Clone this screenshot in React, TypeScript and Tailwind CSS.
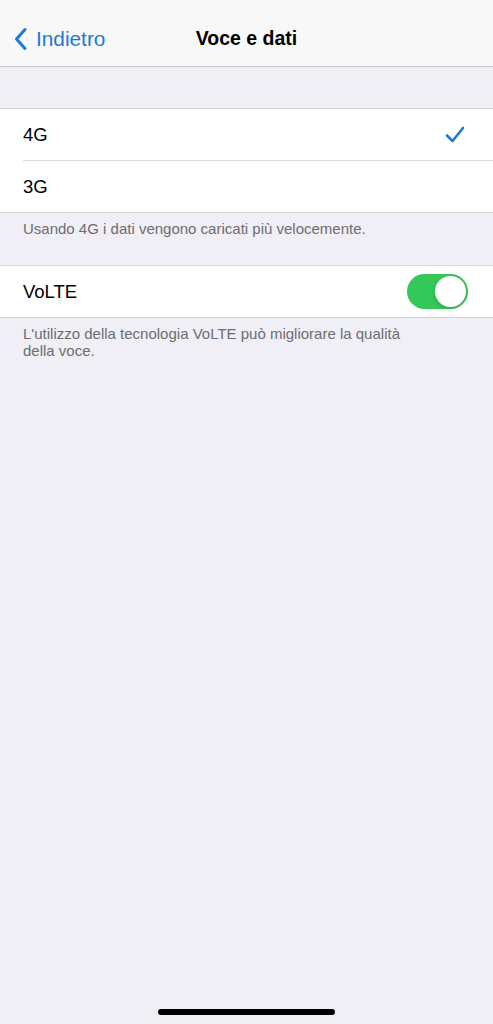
import React from "react";

const font = { fontFamily: '"Liberation Sans", Arial, sans-serif' };

function Toggle() {
  return (
    <div className="relative w-[61px] h-[35px] rounded-full bg-[#34c759]">
      <div className="absolute right-[2px] top-[2px] w-[31px] h-[31px] rounded-full bg-white shadow-[0_2px_4px_rgba(0,0,0,0.15)]" />
    </div>
  );
}

export default function App() {
  return (
    <div
      className="w-[493px] h-[1024px] bg-[#f0eff5] flex flex-col overflow-hidden"
      style={font}
    >
      {/* Nav bar */}
      <div className="h-[67px] bg-[#f8f8f8] border-b border-[#c9c8cd] flex items-center relative shrink-0">
        <div className="flex items-center pl-[13px] text-[#1f78d6] text-[20.8px] leading-none pt-[12px]">
          <svg width="16" height="24" viewBox="0 0 16 24" className="mr-[7px]">
            <path
              d="M12 2.5 L3.5 12 L12 21.5"
              fill="none"
              stroke="#1f78d6"
              strokeWidth="3"
              strokeLinecap="round"
              strokeLinejoin="round"
            />
          </svg>
          <span>Indietro</span>
        </div>
        <div className="absolute left-0 right-0 top-0 bottom-0 flex items-center justify-center pt-[12px] pointer-events-none">
          <span className="text-[19.5px] font-bold text-black">Voce e dati</span>
        </div>
      </div>

      <div className="h-[41px] shrink-0" />

      {/* Network group */}
      <div className="bg-white border-t border-b border-[#d4d3d8] shrink-0">
        <div className="h-[51px] flex items-center justify-between pl-[23px] pr-[28px]">
          <span className="text-[18.5px] text-black">4G</span>
          <svg width="20" height="17" viewBox="0 0 20 17">
            <path
              d="M2 9.5 L7.5 15 L18 2"
              fill="none"
              stroke="#1f76d4"
              strokeWidth="2.6"
              strokeLinecap="round"
              strokeLinejoin="round"
            />
          </svg>
        </div>
        <div className="ml-[23px] border-t border-[#dcdbe0]" />
        <div className="h-[51px] flex items-center pl-[23px]">
          <span className="text-[18.5px] text-black">3G</span>
        </div>
      </div>

      <div className="h-[52px] shrink-0 pl-[23px] pt-[7px]">
        <p className="text-[15px] leading-[18px] text-[#6d6d72]">
          Usando 4G i dati vengono caricati più velocemente.
        </p>
      </div>

      {/* VoLTE group */}
      <div className="bg-white border-t border-b border-[#d4d3d8] shrink-0">
        <div className="h-[51px] flex items-center justify-between pl-[23px] pr-[25px]">
          <span className="text-[18.5px] text-black">VoLTE</span>
          <Toggle />
        </div>
      </div>

      <div className="pl-[23px] pt-[7px] shrink-0">
        <p className="text-[15px] leading-[17px] text-[#6d6d72]">
          L'utilizzo della tecnologia VoLTE può migliorare la qualità
          <br />
          della voce.
        </p>
      </div>

      <div className="flex-1" />

      <div className="flex justify-center pb-[9px] shrink-0">
        <div className="w-[177px] h-[6px] rounded-full bg-black" />
      </div>
    </div>
  );
}
